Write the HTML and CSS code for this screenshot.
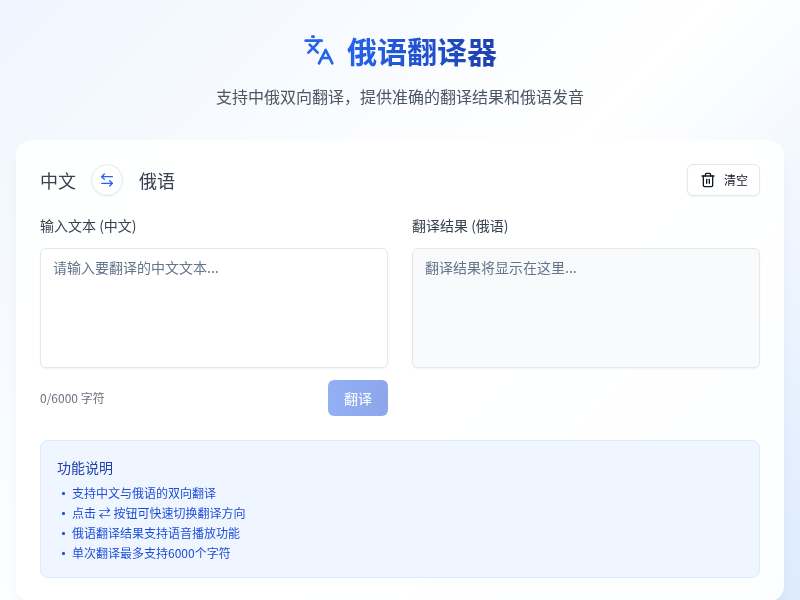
FILE: index.html
```html
<!DOCTYPE html>
<html lang="zh">
<head>
<meta charset="utf-8">
<title>俄语翻译器</title>
<link rel="stylesheet" href="styles.css">
</head>
<body>
<div class="page">
  <header class="hero">
    <div class="hero-title">
      <svg class="hero-icon" viewBox="0 0 24 24" fill="none" stroke="currentColor" stroke-width="2" stroke-linecap="round" stroke-linejoin="round"><path d="m5 8 6 6"/><path d="m4 14 6-6 2-3"/><path d="M2 5h12"/><path d="M7 2h1"/><path d="m22 22-5-10-5 10"/><path d="M14 18h6"/></svg>
      <h1>俄语翻译器</h1>
    </div>
    <p class="subtitle">支持中俄双向翻译，提供准确的翻译结果和俄语发音</p>
  </header>
  <main class="card">
    <div class="toolbar">
      <div class="langs">
        <span class="lang">中文</span>
        <button class="swap" type="button"><svg viewBox="0 0 24 24" fill="none" stroke="currentColor" stroke-width="2" stroke-linecap="round" stroke-linejoin="round"><path d="M8 3 4 7l4 4"/><path d="M4 7h16"/><path d="m16 21 4-4-4-4"/><path d="M20 17H4"/></svg></button>
        <span class="lang">俄语</span>
      </div>
      <button class="clear" type="button"><svg viewBox="0 0 24 24" fill="none" stroke="currentColor" stroke-width="2" stroke-linecap="round" stroke-linejoin="round"><path d="M3 6h18"/><path d="M19 6v14c0 1-1 2-2 2H7c-1 0-2-1-2-2V6"/><path d="M8 6V4c0-1 1-2 2-2h4c1 0 2 1 2 2v2"/><path d="M10 11v6"/><path d="M14 11v6"/></svg>清空</button>
    </div>
    <div class="columns">
      <section class="col">
        <label class="col-label" for="src">输入文本 (中文)</label>
        <textarea id="src" class="box" placeholder="请输入要翻译的中文文本..."></textarea>
        <div class="col-foot">
          <span class="count">0/6000 字符</span>
          <button class="go" type="button">翻译</button>
        </div>
      </section>
      <section class="col">
        <div class="col-label">翻译结果 (俄语)</div>
        <div class="box box-out">翻译结果将显示在这里...</div>
      </section>
    </div>
    <aside class="info">
      <h2>功能说明</h2>
      <ul>
        <li>支持中文与俄语的双向翻译</li>
        <li>点击 ⇄ 按钮可快速切换翻译方向</li>
        <li>俄语翻译结果支持语音播放功能</li>
        <li>单次翻译最多支持6000个字符</li>
      </ul>
    </aside>
  </main>
</div>
</body>
</html>
```
FILE: styles.css
```css
* { box-sizing: border-box; }
html, body { margin: 0; padding: 0; }
body {
  font-family: "Noto Sans CJK SC", "Noto Sans", sans-serif;
  color: #111827;
}
.page {
  min-height: 100vh;
  padding: 32px 16px;
  background: linear-gradient(135deg, #eff6ff 0%, #ffffff 50%, #dbeafe 100%);
}
.hero { text-align: center; margin-bottom: 32px; will-change: transform; }
.hero-title { display: flex; align-items: center; justify-content: center; gap: 12px; margin-bottom: 16px; }
.hero-icon { width: 32px; height: 32px; color: #2563eb; }
h1 {
  margin: 0;
  font-size: 30px;
  line-height: 36px;
  font-weight: 700;
  background: linear-gradient(90deg, #2563eb, #1e40af);
  -webkit-background-clip: text;
  background-clip: text;
  color: transparent;
}
.subtitle { margin: 0; font-size: 16px; line-height: 24px; color: #4b5563; }
.card {
  background: rgba(255, 255, 255, 0.9);
  -webkit-backdrop-filter: blur(8px);
  backdrop-filter: blur(8px);
  will-change: transform;
  border-radius: 16px;
  padding: 24px;
  box-shadow: 0 10px 15px -3px rgba(0,0,0,.05), 0 4px 6px -4px rgba(0,0,0,.05);
}
.toolbar { display: flex; align-items: center; justify-content: space-between; margin-bottom: 20px; }
.langs { display: flex; align-items: center; gap: 16px; }
.lang { font-size: 18px; line-height: 28px; color: #374151; }
.swap {
  width: 32px; height: 32px; padding: 0;
  margin-left: -1px;
  display: flex; align-items: center; justify-content: center;
  border: 1px solid #e5e7eb; border-radius: 50%;
  background: #fff; color: #2563eb;
  box-shadow: 0 1px 2px rgba(0,0,0,.05);
}
.swap svg { width: 16px; height: 16px; }
.clear {
  display: flex; align-items: center; gap: 8px;
  height: 32px; padding: 0 11px 1px 12px;
  border: 1px solid #e5e7eb; border-radius: 6px;
  background: #fff; color: #111827;
  font: inherit; font-size: 12px; line-height: 16px;
  box-shadow: 0 1px 2px rgba(0,0,0,.05);
}
.clear svg { width: 16px; height: 16px; }
.columns { display: grid; grid-template-columns: 1fr 1fr; gap: 24px; margin-bottom: 24px; }
.col { display: flex; flex-direction: column; }
.col-label { display: block; font-size: 14px; line-height: 18px; color: #374151; margin-bottom: 14px; }
.box {
  display: block; width: 100%; height: 120px;
  padding: 8px 12px;
  border: 1px solid #e5e7eb; border-radius: 6px;
  background: #fff;
  font: inherit; font-size: 14px; line-height: 20px;
  color: #64748b;
  resize: none; outline: none;
  box-shadow: 0 1px 2px rgba(0,0,0,.05);
}
.box::placeholder { color: #64748b; opacity: 1; }
.box-out { background: #f9fafb; }
.col-foot { display: flex; align-items: center; justify-content: space-between; margin-top: 12px; }
.count { font-size: 12px; line-height: 16px; color: #6b7280; }
.go {
  width: 60px; height: 36px; padding: 0;
  border: 0; border-radius: 6px;
  background: linear-gradient(90deg, #2563eb, #1d4ed8); color: #fff; opacity: .5;
  font: inherit; font-size: 14px;
}
.info {
  padding: 16px;
  border: 1px solid #dbeafe; border-radius: 8px;
  background: #eff6ff;
}
.info h2 { margin: 0 0 8px; font-size: 14px; line-height: 20px; font-weight: 400; color: #1e40af; }
.info ul { display: flex; flex-direction: column; gap: 4px; margin: 0; padding: 0; list-style: none; }
.info li { position: relative; padding-left: 15px; font-size: 12px; line-height: 16px; color: #1d4ed8; }
.info li::before { content: ""; position: absolute; left: 5px; top: 7px; width: 2.5px; height: 2.5px; border-radius: 50%; background: #1d4ed8; }
```
